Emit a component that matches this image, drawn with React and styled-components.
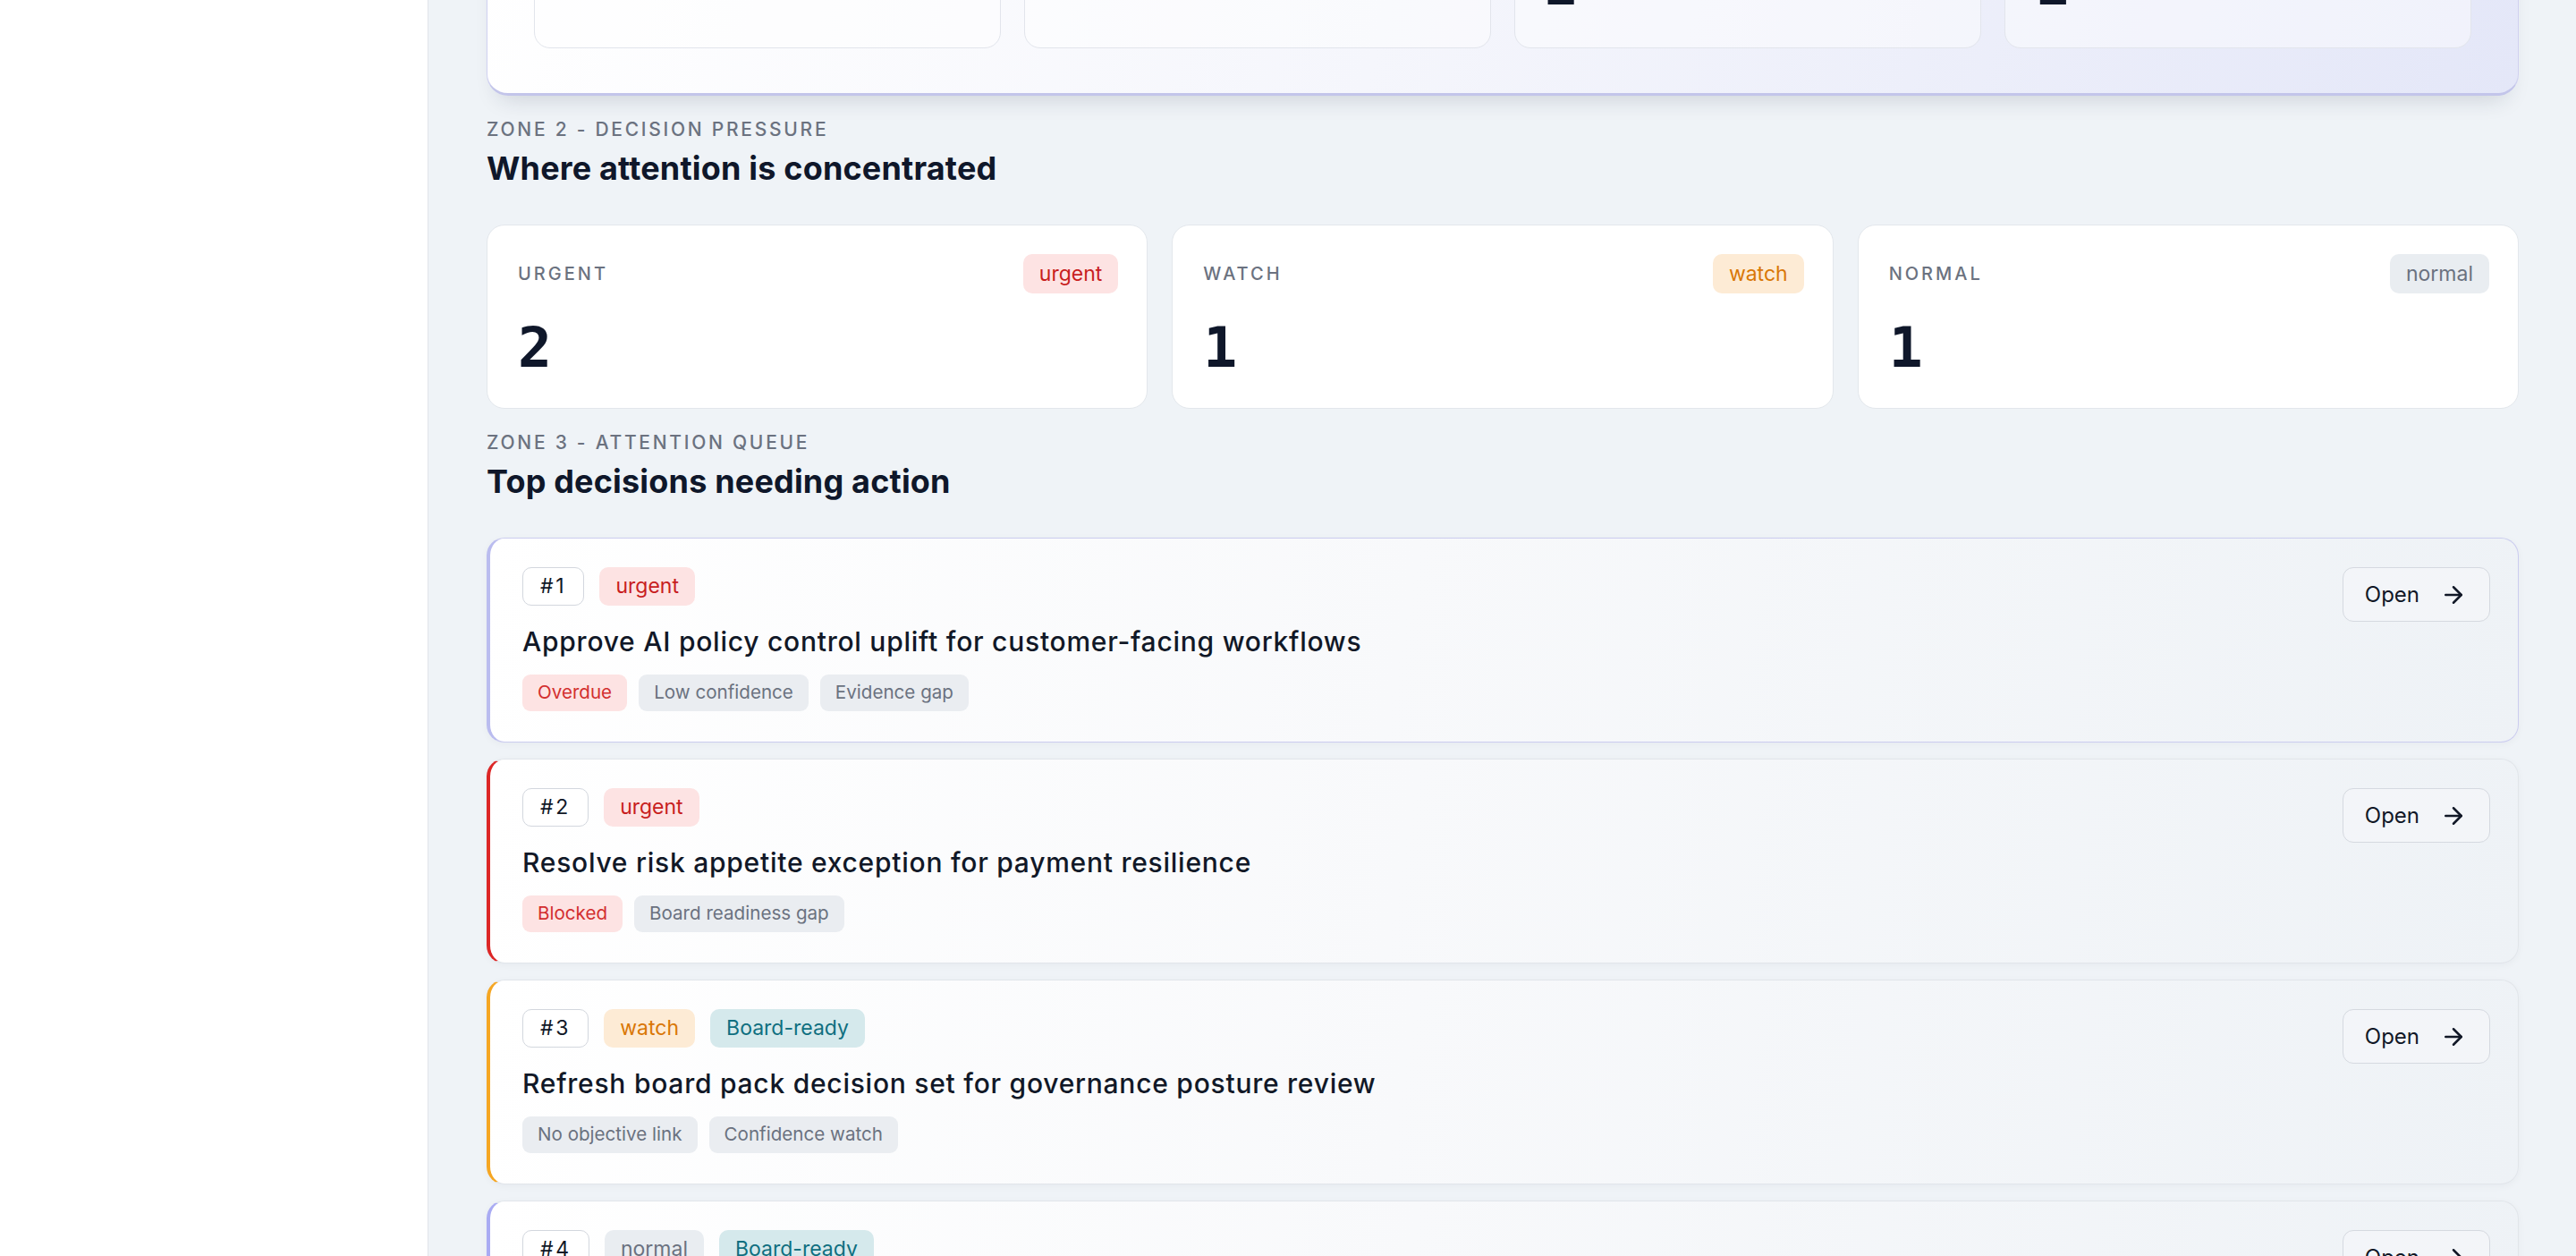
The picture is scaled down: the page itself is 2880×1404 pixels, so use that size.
import React from 'react';
import styled, { createGlobalStyle } from 'styled-components';
import { ArrowRight } from 'lucide-react';

const GlobalStyle = createGlobalStyle`
  html, body { margin: 0; padding: 0; }
  body {
    background: #eff3f7;
    font-family: Inter, "Noto Sans", "Liberation Sans", sans-serif;
    color: #111827;
    -webkit-font-smoothing: antialiased;
  }
  * { box-sizing: border-box; }
`;

const Page = styled.div`
  display: flex;
  min-height: 100vh;
  background: #eff3f7;
`;

const Sidebar = styled.aside`
  width: 479px;
  flex-shrink: 0;
  background: #ffffff;
  border-right: 1px solid #e1e4ea;
`;

const Main = styled.main`
  flex: 1;
  min-width: 0;
  padding: 0 64px 80px 65px;
`;

const Content = styled.div`
  display: flex;
  flex-direction: column;
  margin-top: -182px;
`;

const HeroPanel = styled.section`
  border-radius: 24px;
  padding: 52px 52px 50px;
  border: 1px solid #d0d1f0;
  border-bottom: 3px solid #c3c5ea;
  background: linear-gradient(105deg, #ffffff 0%, #f5f6fc 45%, #e4e7f8 100%);
  box-shadow: 0 16px 26px -14px rgba(30, 41, 59, 0.18);
`;

const StatGrid = styled.div`
  display: grid;
  grid-template-columns: repeat(4, 1fr);
  gap: 26px;
`;

const StatCard = styled.div`
  display: flex;
  flex-direction: column;
  gap: 20px;
  padding: 32px 33px 38px;
  border: 1px solid #e2e5ec;
  border-radius: 18px;
  background: rgba(255, 255, 255, 0.45);
`;

const StatLabel = styled.div`
  font-size: 20px;
  line-height: 28px;
  letter-spacing: 0.15em;
  text-transform: uppercase;
  color: #6b7280;
  font-weight: 500;
`;

const BigNumber = styled.div`
  font-family: "DejaVu Sans Mono", "Liberation Mono", monospace;
  font-weight: 700;
  font-size: 63px;
  line-height: 1;
  color: #0f172a;
`;

const ZoneHeader = styled.header`
  display: flex;
  flex-direction: column;
  gap: 11px;
  padding-top: 26px;
  margin-bottom: 42px;
`;

const ZoneLabel = styled.div`
  font-size: 21px;
  line-height: 24px;
  letter-spacing: 0.13em;
  text-transform: uppercase;
  color: #6b7280;
  font-weight: 500;
`;

const ZoneTitle = styled.h2`
  margin: 0;
  font-size: 36px;
  line-height: 41px;
  font-weight: 700;
  letter-spacing: 0.005em;
  color: #0f172a;
`;

const SummaryGrid = styled.div`
  display: grid;
  grid-template-columns: repeat(3, 1fr);
  gap: 27px;
`;

const SummaryCard = styled.div`
  display: flex;
  flex-direction: column;
  gap: 29px;
  padding: 32px 32px 36px 34px;
  background: #ffffff;
  border: 1px solid #e3e7ec;
  border-radius: 20px;
`;

const CardHead = styled.div`
  display: flex;
  align-items: center;
  justify-content: space-between;
`;

const tones = {
  urgent: { bg: '#fde3e3', fg: '#c81e1e', border: 'transparent' },
  watch: { bg: '#fdebd5', fg: '#d97706', border: 'transparent' },
  normal: { bg: '#e9edf1', fg: '#6b7280', border: 'transparent' },
  board: { bg: '#d5e9ec', fg: '#0f6f80', border: 'transparent' },
  rank: { bg: '#ffffff', fg: '#111827', border: '#d3d7de' },
  danger: { bg: '#fde3e3', fg: '#d32f2f', border: 'transparent' },
  muted: { bg: '#eaedf1', fg: '#6b7280', border: 'transparent' },
};

const Pill = styled.span`
  display: inline-flex;
  align-items: center;
  height: ${(p) => (p.$tall ? 44 : 43)}px;
  padding: 0 ${(p) => (p.$tone === 'rank' ? 19 : 17)}px;
  border-radius: 10px;
  font-size: 23px;
  line-height: 1;
  letter-spacing: ${(p) => (p.$tone === 'rank' ? '0.12em' : '0')};
  background: ${(p) => tones[p.$tone].bg};
  color: ${(p) => tones[p.$tone].fg};
  border: 1px solid ${(p) => tones[p.$tone].border};
`;

const Tag = styled.span`
  display: inline-flex;
  align-items: center;
  height: 41px;
  padding: 0 17px;
  border-radius: 9px;
  font-size: 20.6px;
  line-height: 1;
  background: ${(p) => tones[p.$tone].bg};
  color: ${(p) => tones[p.$tone].fg};
`;

const Queue = styled.div`
  display: flex;
  flex-direction: column;
  gap: 18px;
`;

const DecisionCard = styled.article`
  display: flex;
  align-items: flex-start;
  justify-content: space-between;
  gap: 24px;
  padding: 32px 31px 34px 36px;
  border-radius: 20px;
  border: 1px solid ${(p) => (p.$selected ? '#cbccef' : '#e1e5ea')};
  border-left: 4px solid ${(p) => p.$accent};
  background: linear-gradient(100deg, #ffffff 0%, #f8f9fb 45%, #eef2f6 100%);
  box-shadow: 0 2px 8px rgba(15, 23, 42, 0.04);
`;

const DecisionBody = styled.div`
  display: flex;
  flex-direction: column;
  min-width: 0;
`;

const ChipRow = styled.div`
  display: flex;
  gap: 17px;
  margin-bottom: 21px;
`;

const DecisionTitle = styled.h3`
  margin: 0 0 18px;
  font-size: 30px;
  line-height: 38px;
  font-weight: 500;
  letter-spacing: 0.025em;
  color: #111827;
`;

const TagRow = styled.div`
  display: flex;
  gap: 13px;
`;

const OpenButton = styled.button`
  display: inline-flex;
  align-items: center;
  gap: 23px;
  height: 61px;
  padding: 0 25px 0 24px;
  flex-shrink: 0;
  border: 1px solid #d5d9e0;
  border-radius: 12px;
  background: rgba(243, 245, 248, 0.9);
  font-family: inherit;
  font-size: 24px;
  color: #111827;
  cursor: pointer;
`;

const stats = [
  { label: 'Open decisions', value: '—' },
  { label: 'Avg confidence', value: '—' },
  { label: 'Board-ready', value: '2' },
  { label: 'Overdue', value: '1' },
];

const pressure = [
  { label: 'Urgent', tone: 'urgent', value: 2 },
  { label: 'Watch', tone: 'watch', value: 1 },
  { label: 'Normal', tone: 'normal', value: 1 },
];

const decisions = [
  {
    rank: 1,
    severity: 'urgent',
    board: false,
    selected: true,
    accent: '#babcef',
    title: 'Approve AI policy control uplift for customer-facing workflows',
    tags: [
      { label: 'Overdue', tone: 'danger' },
      { label: 'Low confidence', tone: 'muted' },
      { label: 'Evidence gap', tone: 'muted' },
    ],
  },
  {
    rank: 2,
    severity: 'urgent',
    board: false,
    accent: '#dc2626',
    title: 'Resolve risk appetite exception for payment resilience',
    tags: [
      { label: 'Blocked', tone: 'danger' },
      { label: 'Board readiness gap', tone: 'muted' },
    ],
  },
  {
    rank: 3,
    severity: 'watch',
    board: true,
    accent: '#f5a623',
    title: 'Refresh board pack decision set for governance posture review',
    tags: [
      { label: 'No objective link', tone: 'muted' },
      { label: 'Confidence watch', tone: 'muted' },
    ],
  },
  {
    rank: 4,
    severity: 'normal',
    board: true,
    accent: '#a9abf3',
    title: 'Confirm third-party assurance scope for cloud migration',
    tags: [{ label: 'On track', tone: 'muted' }],
  },
];

export default function App() {
  return (
    <>
      <GlobalStyle />
      <Page>
        <Sidebar />
        <Main>
          <Content>
            <HeroPanel>
              <StatGrid>
                {stats.map((s) => (
                  <StatCard key={s.label}>
                    <StatLabel>{s.label}</StatLabel>
                    <BigNumber>{s.value}</BigNumber>
                  </StatCard>
                ))}
              </StatGrid>
            </HeroPanel>

            <ZoneHeader>
              <ZoneLabel>Zone 2 - Decision pressure</ZoneLabel>
              <ZoneTitle>Where attention is concentrated</ZoneTitle>
            </ZoneHeader>
            <SummaryGrid>
              {pressure.map((p) => (
                <SummaryCard key={p.label}>
                  <CardHead>
                    <StatLabel>{p.label}</StatLabel>
                    <Pill $tone={p.tone} $tall>
                      {p.tone}
                    </Pill>
                  </CardHead>
                  <BigNumber>{p.value}</BigNumber>
                </SummaryCard>
              ))}
            </SummaryGrid>

            <ZoneHeader>
              <ZoneLabel>Zone 3 - Attention queue</ZoneLabel>
              <ZoneTitle>Top decisions needing action</ZoneTitle>
            </ZoneHeader>
            <Queue>
              {decisions.map((d) => (
                <DecisionCard key={d.rank} $accent={d.accent} $selected={d.selected}>
                  <DecisionBody>
                    <ChipRow>
                      <Pill $tone="rank">#{d.rank}</Pill>
                      <Pill $tone={d.severity}>{d.severity}</Pill>
                      {d.board && <Pill $tone="board">Board-ready</Pill>}
                    </ChipRow>
                    <DecisionTitle>{d.title}</DecisionTitle>
                    <TagRow>
                      {d.tags.map((t) => (
                        <Tag key={t.label} $tone={t.tone}>
                          {t.label}
                        </Tag>
                      ))}
                    </TagRow>
                  </DecisionBody>
                  <OpenButton type="button">
                    Open
                    <ArrowRight size={30} strokeWidth={2} />
                  </OpenButton>
                </DecisionCard>
              ))}
            </Queue>
          </Content>
        </Main>
      </Page>
    </>
  );
}
